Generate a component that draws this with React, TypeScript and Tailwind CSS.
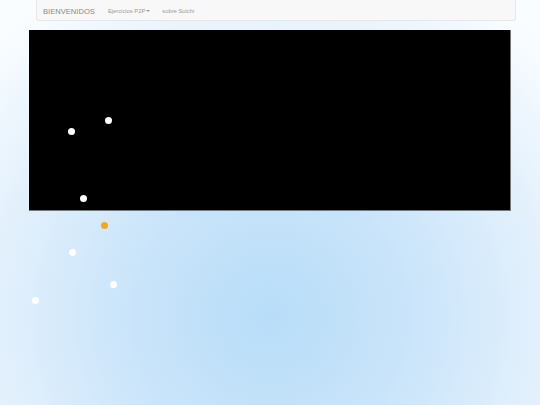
export default function App() {
  const dots = [
    { x: 108, y: 120, c: 'bg-white' },
    { x: 71, y: 131, c: 'bg-white' },
    { x: 83, y: 198, c: 'bg-white' },
    { x: 104, y: 225, c: 'bg-[#f5a623]' },
    { x: 72, y: 252, c: 'bg-white' },
    { x: 113, y: 284, c: 'bg-white' },
    { x: 35, y: 300, c: 'bg-white' },
  ]

  return (
    <div
      className="relative w-[540px] h-[405px] overflow-hidden bg-[radial-gradient(ellipse_72%_95%_at_50%_78%,#b8ddf8_0%,#c9e4fa_35%,#e2f0fc_70%,#fafdff_100%)]"
      style={{ fontFamily: '"Liberation Sans", Arial, sans-serif' }}
    >
      <nav className="mx-[36px] w-[480px] h-[21px] flex items-center pt-[3px] px-[6px] bg-[#f8f8f8] border border-t-0 border-[#e7e7e7] rounded-b-[3px]">
        <span className="text-[7.6px] text-[#8a8a8a] leading-none">BIENVENIDOS</span>
        <span className="ml-[13px] text-[5.8px] text-[#999] leading-none flex items-center">
          Ejercicios P2P
          <span className="ml-[1px] inline-block w-0 h-0 border-l-[2px] border-r-[2px] border-t-[2px] border-l-transparent border-r-transparent border-t-[#999]" />
        </span>
        <span className="ml-[12px] text-[5.8px] text-[#999] leading-none">sobre Suichi</span>
      </nav>

      <div className="mt-[9px] ml-[29px] w-[482px] h-[181px] bg-black border-r border-b border-[#777]" />

      {dots.map((d, i) => (
        <span
          key={i}
          className={`absolute w-[7px] h-[7px] rounded-full ${d.c}`}
          style={{ left: d.x - 3.5, top: d.y - 3.5 }}
        />
      ))}
    </div>
  )
}
